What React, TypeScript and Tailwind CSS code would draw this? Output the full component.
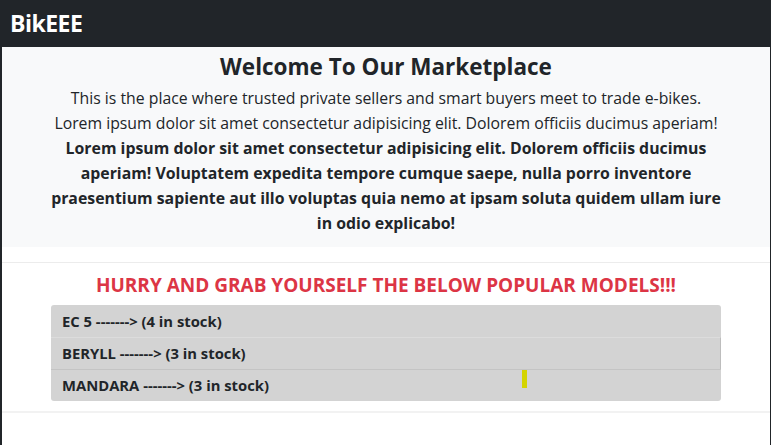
const models = [
  { name: "EC 5", stock: 4 },
  { name: "BERYLL", stock: 3 },
  { name: "MANDARA", stock: 3 },
];

export default function App() {
  return (
    <div className="min-h-screen bg-[#212529] pl-[2px] pr-[1px] font-['Open_Sans',sans-serif] text-[#212529]">
      {/* Navbar */}
      <nav className="h-[47px] flex items-center px-2">
        <span className="text-white font-bold text-[23px] tracking-[-0.5px]">BikEEE</span>
      </nav>

      <div className="bg-white min-h-[398px] flex flex-col">
        {/* Jumbotron */}
        <section className="bg-[#f8f9fa] pt-[5px] pb-[11px] text-center">
          <h1 className="text-[22.5px] leading-[29px] font-bold mb-[5px]">Welcome To Our Marketplace</h1>
          <p className="text-[15.8px] leading-[25px]">
            This is the place where trusted private sellers and smart buyers meet to trade e-bikes.
            <br />
            Lorem ipsum dolor sit amet consectetur adipisicing elit. Dolorem officiis ducimus aperiam!
          </p>
          <p className="mx-auto w-[680px] text-[15.85px] leading-[25px] font-bold">
            Lorem ipsum dolor sit amet consectetur adipisicing elit. Dolorem officiis ducimus aperiam! Voluptatem
            expedita tempore cumque saepe, nulla porro inventore praesentium sapiente aut illo voluptas quia nemo at
            ipsam soluta quidem ullam iure in odio explicabo!
          </p>
        </section>

        <div className="h-[15px]" />
        <hr className="border-t border-[#ececec]" />

        {/* Popular models */}
        <section className="pt-[9px] pb-[10px]">
          <h2 className="text-center text-[#dc3545] font-bold text-[19px] leading-[26px] mb-[7px]">
            HURRY AND GRAB YOURSELF THE BELOW POPULAR MODELS!!!
          </h2>
          <ul className="relative mx-auto w-[670px] rounded-[3px] bg-[#d3d3d3] overflow-hidden">
            {models.map((m, i) => (
              <li
                key={m.name}
                className={
                  i === 0
                    ? "h-[32px] flex items-center px-[11px] text-[14.8px] font-bold"
                    : i === 1
                      ? "h-[32px] flex items-center px-[11px] text-[14.8px] font-bold border-t border-[#dcdcdc] border-r border-r-[#bdbdbd]"
                      : "h-[32px] flex items-center px-[11px] text-[14.8px] font-bold border-t border-[#c4c4c4]"
                }
              >
                {m.name} -------&gt; ({m.stock} in stock)
              </li>
            ))}
            <span className="absolute left-[471px] top-[65px] w-[5px] h-[18px] bg-[#d4d400]" />
          </ul>
        </section>

        <hr className="border-t-2 border-[#f2f2f2]" />
      </div>
    </div>
  );
}
